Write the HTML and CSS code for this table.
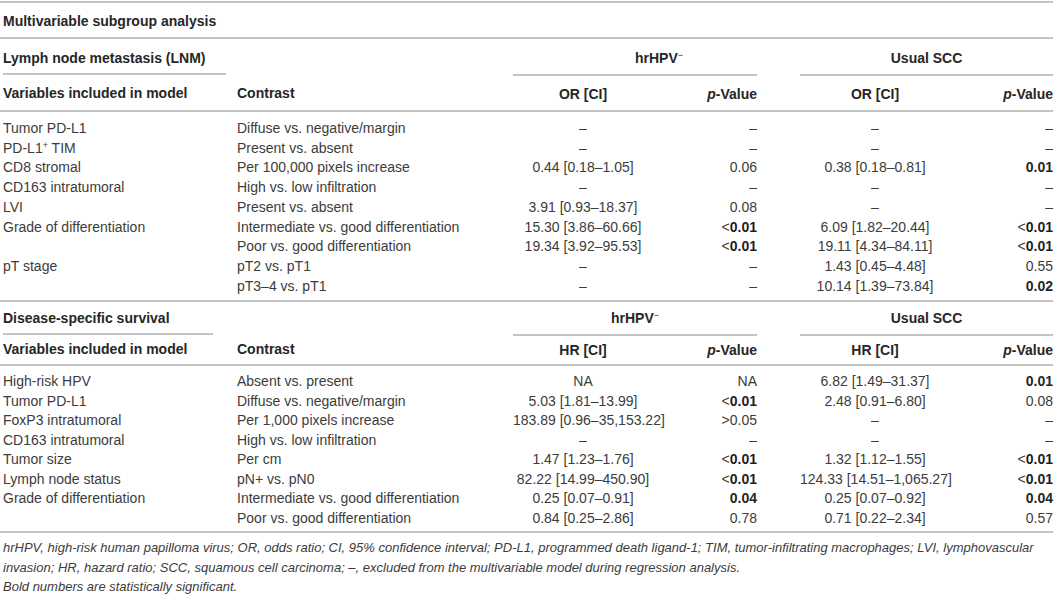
FILE: index.html
```html
<!DOCTYPE html>
<html>
<head>
<meta charset="utf-8">
<link rel="stylesheet" href="styles.css">
</head>
<body>
<div class="page">
<table class="t">
  <colgroup>
    <col class="c1"><col class="c2"><col class="c3"><col class="c4"><col class="cg"><col class="c6"><col class="c7">
  </colgroup>
  <tbody>
    <tr class="title rule">
      <td colspan="7" class="b">Multivariable subgroup analysis</td>
    </tr>
    <tr class="grp g1">
      <td class="b"><div class="u u1">Lymph node metastasis (LNM)</div></td>
      <td></td>
      <td colspan="2" class="b ul hh1">hrHPV<sup>−</sup></td>
      <td></td>
      <td colspan="2" class="b ul ctr">Usual SCC</td>
    </tr>
    <tr class="hdr rule">
      <td class="b">Variables included in model</td>
      <td class="b">Contrast</td>
      <td class="b ctr">OR [CI]</td>
      <td class="b r"><i>p</i>-Value</td>
      <td></td>
      <td class="b ctr">OR [CI]</td>
      <td class="b r"><i>p</i>-Value</td>
    </tr>
    <tr class="first">
      <td>Tumor PD-L1</td><td>Diffuse vs. negative/margin</td><td class="ctr">–</td><td class="r">–</td><td></td><td class="ctr">–</td><td class="r">–</td>
    </tr>
    <tr>
      <td>PD-L1<sup class="sp">+</sup> TIM</td><td>Present vs. absent</td><td class="ctr">–</td><td class="r">–</td><td></td><td class="ctr">–</td><td class="r">–</td>
    </tr>
    <tr>
      <td>CD8 stromal</td><td>Per 100,000 pixels increase</td><td class="ctr">0.44 [0.18–1.05]</td><td class="r">0.06</td><td></td><td class="ctr">0.38 [0.18–0.81]</td><td class="r b">0.01</td>
    </tr>
    <tr>
      <td>CD163 intratumoral</td><td>High vs. low infiltration</td><td class="ctr">–</td><td class="r">–</td><td></td><td class="ctr">–</td><td class="r">–</td>
    </tr>
    <tr>
      <td>LVI</td><td>Present vs. absent</td><td class="ctr">3.91 [0.93–18.37]</td><td class="r">0.08</td><td></td><td class="ctr">–</td><td class="r">–</td>
    </tr>
    <tr>
      <td>Grade of differentiation</td><td>Intermediate vs. good differentiation</td><td class="ctr">15.30 [3.86–60.66]</td><td class="r">&lt;<b>0.01</b></td><td></td><td class="ctr">6.09 [1.82–20.44]</td><td class="r">&lt;<b>0.01</b></td>
    </tr>
    <tr>
      <td></td><td>Poor vs. good differentiation</td><td class="ctr">19.34 [3.92–95.53]</td><td class="r">&lt;<b>0.01</b></td><td></td><td class="ctr">19.11 [4.34–84.11]</td><td class="r">&lt;<b>0.01</b></td>
    </tr>
    <tr>
      <td>pT stage</td><td>pT2 vs. pT1</td><td class="ctr">–</td><td class="r">–</td><td></td><td class="ctr">1.43 [0.45–4.48]</td><td class="r">0.55</td>
    </tr>
    <tr class="last rule">
      <td></td><td>pT3–4 vs. pT1</td><td class="ctr">–</td><td class="r">–</td><td></td><td class="ctr">10.14 [1.39–73.84]</td><td class="r b">0.02</td>
    </tr>

    <tr class="grp g2">
      <td class="b"><div class="u u2">Disease-specific survival</div></td>
      <td></td>
      <td colspan="2" class="b ul ctr">hrHPV<sup>−</sup></td>
      <td></td>
      <td colspan="2" class="b ul ctr">Usual SCC</td>
    </tr>
    <tr class="hdr2 rule">
      <td class="b">Variables included in model</td>
      <td class="b">Contrast</td>
      <td class="b ctr">HR [CI]</td>
      <td class="b r"><i>p</i>-Value</td>
      <td></td>
      <td class="b ctr">HR [CI]</td>
      <td class="b r"><i>p</i>-Value</td>
    </tr>
    <tr class="first2">
      <td>High-risk HPV</td><td>Absent vs. present</td><td class="ctr">NA</td><td class="r">NA</td><td></td><td class="ctr">6.82 [1.49–31.37]</td><td class="r b">0.01</td>
    </tr>
    <tr>
      <td>Tumor PD-L1</td><td>Diffuse vs. negative/margin</td><td class="ctr">5.03 [1.81–13.99]</td><td class="r">&lt;<b>0.01</b></td><td></td><td class="ctr">2.48 [0.91–6.80]</td><td class="r">0.08</td>
    </tr>
    <tr>
      <td>FoxP3 intratumoral</td><td>Per 1,000 pixels increase</td><td class="ctr">183.89 [0.96–35,153.22]</td><td class="r">&gt;0.05</td><td></td><td class="ctr">–</td><td class="r">–</td>
    </tr>
    <tr>
      <td>CD163 intratumoral</td><td>High vs. low infiltration</td><td class="ctr">–</td><td class="r">–</td><td></td><td class="ctr">–</td><td class="r">–</td>
    </tr>
    <tr>
      <td>Tumor size</td><td>Per cm</td><td class="ctr">1.47 [1.23–1.76]</td><td class="r">&lt;<b>0.01</b></td><td></td><td class="ctr">1.32 [1.12–1.55]</td><td class="r">&lt;<b>0.01</b></td>
    </tr>
    <tr>
      <td>Lymph node status</td><td>pN+ vs. pN0</td><td class="ctr">82.22 [14.99–450.90]</td><td class="r">&lt;<b>0.01</b></td><td></td><td class="ctr">124.33 [14.51–1,065.27]</td><td class="r">&lt;<b>0.01</b></td>
    </tr>
    <tr>
      <td>Grade of differentiation</td><td>Intermediate vs. good differentiation</td><td class="ctr">0.25 [0.07–0.91]</td><td class="r b">0.04</td><td></td><td class="ctr">0.25 [0.07–0.92]</td><td class="r b">0.04</td>
    </tr>
    <tr class="last2 rule">
      <td></td><td>Poor vs. good differentiation</td><td class="ctr">0.84 [0.25–2.86]</td><td class="r">0.78</td><td></td><td class="ctr">0.71 [0.22–2.34]</td><td class="r">0.57</td>
    </tr>
  </tbody>
</table>
<div class="notes">
  <p>hrHPV, high-risk human papilloma virus; OR, odds ratio; CI, 95% confidence interval; PD-L1, programmed death ligand-1; TIM, tumor-infiltrating macrophages; LVI, lymphovascular invasion; HR, hazard ratio; SCC, squamous cell carcinoma; –, excluded from the multivariable model during regression analysis.</p>
  <p>Bold numbers are statistically significant.</p>
</div>
</div>
</body>
</html>
```

FILE: styles.css
```css
html, body {
  margin: 0;
  padding: 0;
  background: #ffffff;
}
body {
  font-family: "Liberation Sans", Arial, sans-serif;
  font-size: 14px;
  color: #3c3c3c;
}
.page {
  width: 1053px;
  padding-top: 1px;
}
.t {
  width: 1053px;
  border-collapse: collapse;
  table-layout: fixed;
  border-top: 2px solid #c4c4c4;
}
.c1 { width: 237px; }
.c2 { width: 276px; }
.c3 { width: 140px; }
.c4 { width: 104px; }
.cg { width: 43px; }
.c6 { width: 150px; }
.c7 { width: 103px; }

.t td {
  padding: 0;
  line-height: 19.7px;
  white-space: nowrap;
  vertical-align: top;
}
.t td:first-child { padding-left: 3px; }
.b, .t td.b { font-weight: bold; color: #262626; }
b { color: #1f1f1f; }
.ctr { text-align: center; }
.r { text-align: right; }
sup {
  font-size: 9px;
  line-height: 0;
  vertical-align: 5px;
  font-weight: normal;
}
.sp { vertical-align: 5px; }

.rule td { border-bottom: 2px solid #c4c4c4; }

.title td { padding-top: 8px; padding-bottom: 6px; line-height: 20px; }
.grp td { line-height: 20px; }
.g1 td { padding-top: 9px; padding-bottom: 5px; height: 20px; }
.g1 td:first-child { padding-bottom: 0; }
.g1 td.ul { border-bottom: 2px solid #c4c4c4; }
.hh1 { padding-left: 48px !important; text-align: center; }
.u { border-bottom: 2px solid #c4c4c4; }
.u1 { width: 223px; padding-bottom: 5px; }
.u2 { width: 210px; padding-bottom: 5px; }

.hdr td { padding-top: 8px; padding-bottom: 6px; line-height: 20px; }

.first td { padding-top: 7px; }
.last td { padding-bottom: 4px; }

.g2 td { padding-top: 6px; padding-bottom: 5px; }
.g2 td:first-child { padding-bottom: 0; }
.g2 td.ul { border-bottom: 2px solid #c4c4c4; }
.hdr2 td { padding-top: 4px; padding-bottom: 4px; line-height: 20px; }
.first2 td { padding-top: 6px; }
.t tr td { }
.t tr.first2 ~ tr td { line-height: 19.5px; }
.first2 td { line-height: 19.5px; }
.last2 td { padding-bottom: 3px; }

.notes {
  font-style: italic;
  font-size: 13px;
  line-height: 19.5px;
  color: #3c3c3c;
  padding: 5px 3px 0 3px;
  width: 1045px;
}
.notes p { margin: 0; }
```
